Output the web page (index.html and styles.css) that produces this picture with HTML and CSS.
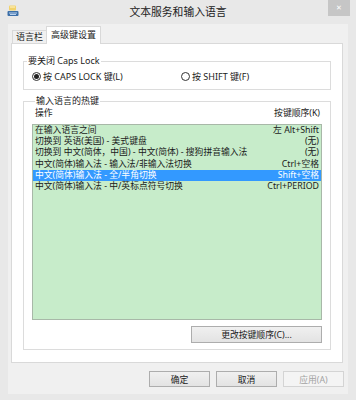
FILE: index.html
```html
<!DOCTYPE html>
<html lang="zh-CN">
<head>
    <meta charset="UTF-8">
    <title>文本服务和输入语言</title>
    <link rel="stylesheet" href="styles.css">
</head>
<body>
    <div class="window">
        <div class="titlebar">
            <svg class="app-icon" width="12" height="12" viewBox="0 0 12 12">
                <rect x="2" y="0.5" width="7" height="5" rx="1" fill="#f2d36b"/>
                <rect x="3" y="1.5" width="5" height="1" fill="#fff4c8"/>
                <rect x="0.5" y="6" width="11" height="5" rx="1" fill="#3c6fa8"/>
                <rect x="2" y="7.5" width="8" height="1" fill="#b9d2ee"/>
                <rect x="3" y="9" width="6" height="1" fill="#b9d2ee"/>
            </svg>
            <div class="title">文本服务和输入语言</div>
            <div class="close">&#x2715;</div>
        </div>

        <div class="client">
            <div class="tabs">
                <div class="tab">语言栏</div>
                <div class="tab active">高级键设置</div>
            </div>

            <div class="panel">
                <fieldset class="group caps">
                    <legend>要关闭 Caps Lock</legend>
                    <div class="radios">
                        <label class="radio checked"><span class="dot"></span>按 CAPS LOCK 键(L)</label>
                        <label class="radio"><span class="dot"></span>按 SHIFT 键(F)</label>
                    </div>
                </fieldset>

                <fieldset class="group hotkeys">
                    <legend>输入语言的热键</legend>
                    <div class="list-head">
                        <span>操作</span>
                        <span>按键顺序(K)</span>
                    </div>
                    <ul class="list">
                        <li><span>在输入语言之间</span><span>左 Alt+Shift</span></li>
                        <li><span>切换到 英语(美国) - 美式键盘</span><span>(无)</span></li>
                        <li><span>切换到 中文(简体，中国) - 中文(简体) - 搜狗拼音输入法</span><span>(无)</span></li>
                        <li><span>中文(简体)输入法 - 输入法/非输入法切换</span><span>Ctrl+空格</span></li>
                        <li class="selected"><span>中文(简体)输入法 - 全/半角切换</span><span>Shift+空格</span></li>
                        <li><span>中文(简体)输入法 - 中/英标点符号切换</span><span>Ctrl+PERIOD</span></li>
                    </ul>
                    <div class="change-row">
                        <button class="btn change">更改按键顺序(C)...</button>
                    </div>
                </fieldset>
            </div>

            <div class="actions">
                <button class="btn">确定</button>
                <button class="btn">取消</button>
                <button class="btn" disabled>应用(A)</button>
            </div>
        </div>
    </div>
</body>
</html>
```

FILE: styles.css
```css
body {
    margin: 0;
    background: #e8e8e8;
    font-family: "Noto Sans", "Noto Sans CJK SC", sans-serif;
    font-size: 8.8px;
    color: #1a1a1a;
}
.window {
    width: 356px;
    height: 400px;
    overflow: hidden;
}
.titlebar {
    height: 24px;
    display: grid;
    grid-template-columns: 1fr auto 1fr;
}
.app-icon {
    margin: 5px 0 0 7px;
}
.title {
    font-size: 10.8px;
    line-height: 24px;
    color: #222;
}
.close {
    justify-self: end;
    width: 22px;
    height: 16px;
    margin-right: 6px;
    background: #c6c6c6;
    color: #fff;
    font-size: 7px;
    line-height: 16px;
    text-align: center;
}
.client {
    margin: 0 8px;
    height: 370px;
    background: #f0f0f0;
    padding-top: 2px;
    box-sizing: border-box;
}
.tabs {
    display: flex;
    align-items: flex-end;
    height: 17px;
    margin-left: 4px;
}
.tab {
    height: 13px;
    line-height: 12px;
    padding: 0 3px;
    border: 1px solid #d9d9d9;
    border-bottom: none;
    box-sizing: border-box;
    background: #f0f0f0;
    font-size: 9px;
}
.tab.active {
    position: relative;
    z-index: 1;
    height: 18px;
    margin-bottom: -1px;
    margin-left: -1px;
    padding: 2px 4px 0;
    background: #fff;
}
.panel {
    width: 332px;
    height: 320px;
    margin-left: 3px;
    background: #fff;
    border: 1px solid #d9d9d9;
    box-sizing: border-box;
    padding: 11px 0 0 11px;
}
.group {
    width: 308px;
    margin: 0;
    padding: 0;
    border: 1px solid #dcdcdc;
    box-sizing: border-box;
    min-inline-size: 0;
}
.group legend {
    margin-left: 3px;
    padding: 0 1px;
    line-height: 12px;
    font-size: 9px;
}
.radios {
    display: flex;
    padding: 3px 0 7px 8px;
}
.radio {
    display: flex;
    align-items: center;
    gap: 2px;
    height: 12px;
    width: 158px;
    font-size: 9px;
}
.dot {
    width: 7px;
    height: 7px;
    border: 1px solid #333;
    border-radius: 50%;
    background: #fff;
    display: flex;
    align-items: center;
    justify-content: center;
}
.radio.checked .dot::after {
    content: "";
    width: 5px;
    height: 5px;
    border-radius: 50%;
    background: #222;
}
.hotkeys {
    margin-top: 5px;
    padding: 0 8px 6px;
}
.list-head {
    display: flex;
    justify-content: space-between;
    line-height: 11px;
    padding: 1px 2px 0 3px;
    margin-bottom: 5px;
}
.list {
    list-style: none;
    margin: 0;
    padding: 0;
    height: 196px;
    background: #c7ecca;
    border: 1px solid #a8b8a8;
    box-sizing: border-box;
}
.list li {
    display: flex;
    justify-content: space-between;
    height: 11.2px;
    line-height: 11.2px;
    padding: 0 2px;
    white-space: nowrap;
}
.list li.selected {
    background: #3399ff;
    color: #fff;
}
.change-row {
    display: flex;
    justify-content: flex-end;
    margin-top: 6px;
}
.btn {
    height: 16px;
    width: 61px;
    padding: 0;
    font-family: inherit;
    font-size: 8.8px;
    color: #1a1a1a;
    background: linear-gradient(#f0f0f0, #e3e3e3);
    border: 1px solid #adadad;
}
.btn.change {
    width: 131px;
    height: 17px;
}
.btn:disabled {
    color: #a3a3a3;
    background: #f4f4f4;
    border-color: #d4d4d4;
}
.actions {
    display: flex;
    justify-content: flex-end;
    gap: 6px;
    margin-top: 8px;
    padding-right: 4px;
}
```
